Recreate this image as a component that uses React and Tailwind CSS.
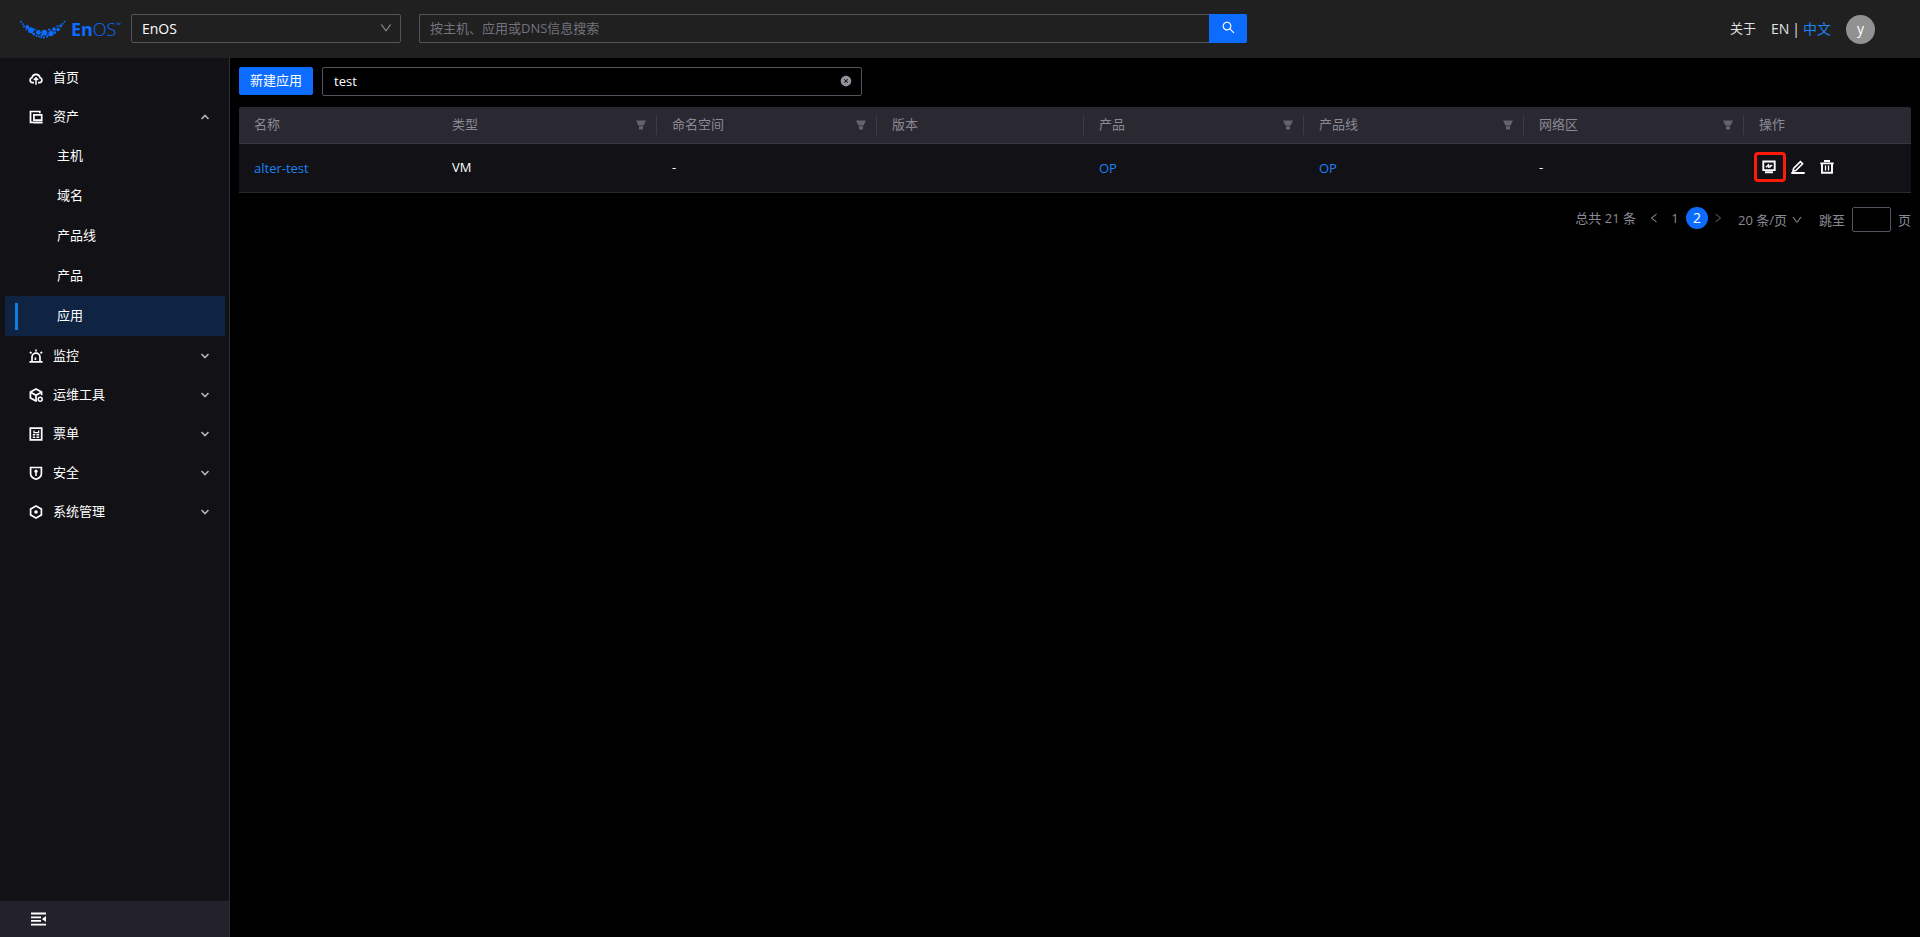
import React, { useState } from 'react';
import {
    AiOutlineDown,
    AiOutlineLeft,
    AiOutlineRight,
    AiOutlineSearch,
    AiFillCloseCircle,
} from 'react-icons/ai';

const logoDots = [
    [1, 1.5, 1], [3, 4, 1], [4, 6.5, 1.1], [7.5, 7, 2], [6.5, 9.6, 0.9], [11.2, 10.3, 3],
    [15.2, 9.4, 1], [14, 14.2, 1.5], [18.8, 12.4, 2.5], [16.8, 16, 1.1], [19.4, 16.6, 1],
    [22, 15.6, 1.2], [25, 12.8, 3], [24.4, 17.8, 1.1], [21.6, 17.6, 0.9], [27.6, 17, 1],
    [28.6, 15.6, 1], [31.8, 13.6, 2.7], [30, 9.6, 1.2], [34.8, 9.2, 1.9], [35.8, 12.6, 1.2],
    [39, 9.4, 1.8], [38.4, 6.2, 1], [41.6, 6, 1.5], [43.6, 3.6, 1], [45.6, 1.4, 0.9],
];

const menu = [
    { key: 'home', label: '首页', icon: HomeIcon },
    { key: 'assets', label: '资产', icon: AssetsIcon, open: true, children: ['主机', '域名', '产品线', '产品', '应用'] },
    { key: 'monitor', label: '监控', icon: AlarmIcon, children: [] },
    { key: 'tools', label: '运维工具', icon: BoxIcon, children: [] },
    { key: 'tickets', label: '票单', icon: TicketIcon, children: [] },
    { key: 'security', label: '安全', icon: ShieldIcon, children: [] },
    { key: 'system', label: '系统管理', icon: SystemIcon, children: [] },
];

const columns = [
    { title: '名称', width: 'w-[198px]' },
    { title: '类型', width: 'w-[220px]', filter: true, divider: true },
    { title: '命名空间', width: 'w-[220px]', filter: true, divider: true },
    { title: '版本', width: 'w-[207px]', divider: true },
    { title: '产品', width: 'w-[220px]', filter: true, divider: true },
    { title: '产品线', width: 'w-[220px]', filter: true, divider: true },
    { title: '网络区', width: 'w-[220px]', filter: true, divider: true },
    { title: '操作', width: 'w-[167px]' },
];

const apps = [
    { id: 0, name: 'alter-test', type: 'VM', namespace: '-', version: '', product: 'OP', line: 'OP', zone: '-' },
];

function Icon({ children, className = 'size-[14px]' }) {
    return (
        <svg viewBox="0 0 14 14" className={className} fill="none" stroke="currentColor" strokeWidth="1.7" aria-hidden="true">
            {children}
        </svg>
    );
}

function HomeIcon() {
    return (
        <Icon>
            <path d="M5 11.7H3.6a2.6 2.6 0 0 1-.6-5.1 4.1 4.1 0 0 1 8 0 2.6 2.6 0 0 1-.6 5.1H9" />
            <path d="M7 13.8V7.2M4.8 9 7 6.8 9.2 9" strokeWidth="1.5" />
        </Icon>
    );
}

function AssetsIcon() {
    return (
        <Icon>
            <path d="M4 12.3H1.5V1.5h9.3v1.7" />
            <path d="M4.9 4.9h7.8v5.3H4.9z" />
            <path d="M4.1 12.5h9.5" strokeWidth="2" />
        </Icon>
    );
}

function AlarmIcon() {
    return (
        <Icon>
            <path d="M.4 12.9h13.2M3 12.9V8.2a4 4 0 0 1 8 0v4.7" />
            <path d="M7 .4v2.2M.8 3l1.8 1.3M13.2 3l-1.8 1.3M6.4 11V8.6" strokeWidth="1.6" />
        </Icon>
    );
}

function BoxIcon() {
    return (
        <Icon>
            <path d="M7.5 12.7 7 13 1.4 9.9V4.1L7 1l5.6 3.1v3.2" />
            <path d="M1.6 4.2 7 7.2l5.4-3M7 7.2V13" />
            <circle cx="11.2" cy="11.2" r="2" strokeWidth="1.5" />
        </Icon>
    );
}

function TicketIcon() {
    return (
        <Icon>
            <path d="M1.3 1.2h11.4v11.6H1.3z" />
            <path d="M5 3.4v2.2h4.6V3.4" strokeWidth="1.3" />
            <path d="M3.8 7.8h2.4M3.8 10.2h2.4M7.4 7.8h2.8M7.4 10.2h2.8" strokeWidth="1.4" />
        </Icon>
    );
}

function ShieldIcon() {
    return (
        <Icon>
            <path d="M1.6 1.5h10.8v6.2c0 2.7-2.4 4.5-5.4 5.5-3-1-5.4-2.8-5.4-5.5z" />
            <path d="M7 5v5" strokeWidth="1.5" />
            <circle cx="7" cy="5.2" r="1.6" fill="currentColor" stroke="none" />
        </Icon>
    );
}

function SystemIcon() {
    return (
        <Icon>
            <path d="M7 1l5.4 3v6L7 13l-5.4-3V4z" />
            <circle cx="7" cy="7" r="1.8" fill="currentColor" stroke="none" />
        </Icon>
    );
}

function FilterIcon() {
    return (
        <svg viewBox="0 0 10 10" className="size-[10px] fill-current" aria-hidden="true">
            <path d="M0 .5h10L7.6 5.4H2.4zM3 6.2h4v3.3H3z" />
        </svg>
    );
}

function ScreenIcon() {
    return (
        <Icon>
            <path d="M1.3 1.5h11.4v8.6H1.3z" strokeWidth="1.9" />
            <path d="M3.8 7.2 6.4 4.8v2.4l1.6-.2V4.8M8 7.2l2.2-2.4" strokeWidth="1.2" />
            <path d="M3 12.3h8" strokeWidth="2" />
        </Icon>
    );
}

function EditIcon() {
    return (
        <Icon>
            <path d="M2.6 8.4 9.4 1.6l2.2 2.2-6.8 6.8-2.8.6z" strokeWidth="1.6" />
            <path d="M.3 13h13.4" strokeWidth="1.8" />
        </Icon>
    );
}

function TrashIcon() {
    return (
        <Icon>
            <path d="M4 1h6M.3 3.4h13.4" strokeWidth="1.9" />
            <path d="M2 3.4v9.4h10V3.4" strokeWidth="1.9" />
            <path d="M5.5 5.5v5M8.5 5.5v5" strokeWidth="1.3" />
        </Icon>
    );
}

function FoldIcon() {
    return (
        <svg viewBox="0 0 16 14" className="h-[14px] w-4" fill="none" stroke="currentColor" strokeWidth="1.8" aria-hidden="true">
            <path d="M0 1.5h15M0 5.3h10M0 8.9h10M0 12.7h15" />
            <path d="M15 4v6L11 7z" fill="currentColor" stroke="none" />
        </svg>
    );
}

function CaretIcon({ up }) {
    return (
        <svg viewBox="0 0 10 6" className="h-[6px] w-[10px] text-[#b4b4b8]" fill="none" stroke="currentColor" strokeWidth="1.6" aria-hidden="true">
            <path d={up ? 'M1.5 5 5 1.5 8.500 5' : 'M1.5 1 5 4.500 8.500 1'} />
        </svg>
    );
}

const Logo = () => (
    <a href="#home" className="flex w-[101px] items-center text-[#0b6cff]">
        <svg viewBox="0 0 47 19" className="mt-px h-[19px] w-[47px] fill-current" aria-hidden="true">
            {logoDots.map(([x, y, r]) => <circle key={`${x}-${y}`} cx={x} cy={y} r={r} />)}
        </svg>
        <span className="ml-[5px] flex text-lg leading-5">
            <b className="font-bold">En</b>
            <span className="font-light">OS</span>
            <sup className="top-0 text-[6px] leading-3">™</sup>
        </span>
    </a>
);

const Header = () => (
    <header className="flex h-[58px] items-center bg-[#202020] pr-[45px] pl-5">
        <Logo />
        <div className="relative mb-px ml-[10px] w-[270px]">
            <select aria-label="EnOS" className="block h-[29px] w-full appearance-none rounded-xs border border-[#54535e] bg-transparent px-[10px] text-sm leading-5 text-white">
                <option>EnOS</option>
            </select>
            <AiOutlineDown className="pointer-events-none absolute top-[7px] right-2 size-[14px] text-[#8b8a94]" />
        </div>
        <form className="mb-px ml-[18px] flex w-[828px]" onSubmit={(e) => e.preventDefault()}>
            <input
                type="text"
                aria-label="搜索"
                placeholder="按主机、应用或DNS信息搜索"
                className="h-[29px] min-w-0 grow rounded-l-xs border border-r-0 border-[#54535e] bg-transparent px-[10px] pb-px text-white placeholder:text-[#73727e]"
            />
            <button aria-label="搜索" className="flex h-[29px] w-[38px] items-center justify-center rounded-r-xs bg-[#0b6cff] pb-0.5 text-white">
                <AiOutlineSearch className="size-[15px]" />
            </button>
        </form>
        <div className="ml-auto flex items-center text-[#e2e2e2]">
            <a href="#about" className="mr-[15px] pb-0.5">关于</a>
            <div className="mr-[15px] flex gap-[3px] text-sm">
                <a href="#en">EN</a>
                <span>|</span>
                <a href="#zh" className="text-[#1b82f5]">中文</a>
            </div>
            <button className="size-[29px] rounded-full bg-[#919191] text-sm text-white">y</button>
        </div>
    </header>
);

const Sidebar = ({ selected, onSelect }) => (
    <aside className="flex w-[230px] shrink-0 flex-col border-r border-[#2f2e36] bg-[#111116]">
        <nav className="grow">
            <ul>
                {menu.map(({ key, label, icon: MenuIcon, open, children }) => (
                    <li key={key}>
                        <button className="flex h-[39px] w-full items-center pr-[19px] pl-[29px] text-white">
                            <MenuIcon />
                            <span className="ml-[10px] grow pb-0.5 text-left">{label}</span>
                            {children && <CaretIcon up={open} />}
                        </button>
                        {open && (
                            <ul className="pr-1 pl-[5px]">
                                {children.map((child) => (
                                    <li key={child} className={child === selected ? 'bg-[#0f2442]' : ''}>
                                        <a href="#app" onClick={() => onSelect(child)} className="flex h-10 items-center pl-[10px] text-white">
                                            <span className={child === selected ? 'h-[27px] w-[3px] bg-[#177ddc]' : 'w-[3px]'} />
                                            <span className="ml-[39px] pb-[3px]">{child}</span>
                                        </a>
                                    </li>
                                ))}
                            </ul>
                        )}
                    </li>
                ))}
            </ul>
        </nav>
        <button aria-label="收起" className="flex h-9 items-center bg-[#23222b] pl-[31px] text-white">
            <FoldIcon />
        </button>
    </aside>
);

const AppTable = () => (
    <table className="w-full table-fixed border-collapse overflow-hidden rounded-t-xs text-left">
        <thead className="bg-[#2a2830] text-[#8b8a94]">
            <tr className="h-9 border-b border-[#38373f]">
                {columns.map(({ title, width, filter, divider }) => (
                    <th key={title} className={`p-0 font-normal ${width}`}>
                        <div className={`flex h-5 items-center justify-between pr-[10px] pl-[15px] ${divider ? 'border-r border-[#3d3c45]' : ''}`}>
                            <span className="pb-0.5">{title}</span>
                            {filter && <button aria-label={`筛选${title}`} className="text-[#64636e]"><FilterIcon /></button>}
                        </div>
                    </th>
                ))}
            </tr>
        </thead>
        <tbody className="bg-[#111116] text-white">
            {apps.map((app) => (
                <tr key={app.id} className="h-[49px] border-b border-[#2a2930]">
                    <td className="py-0 pl-[15px]"><a href="#detail" className="text-[#1b82f5]">{app.name}</a></td>
                    <td className="pt-0 pb-0.5 pl-[15px]">{app.type}</td>
                    <td className="pt-0 pb-0.5 pl-[15px]">{app.namespace}</td>
                    <td className="pt-0 pb-0.5 pl-[15px]">{app.version}</td>
                    <td className="py-0 pl-[15px]"><a href="#product" className="text-[#1b82f5]">{app.product}</a></td>
                    <td className="py-0 pl-[15px]"><a href="#line" className="text-[#1b82f5]">{app.line}</a></td>
                    <td className="pt-0 pb-0.5 pl-[15px]">{app.zone}</td>
                    <td className="pt-0 pb-0.5 pl-[10px]">
                        <div className="flex">
                            <button aria-label="监控" className="relative flex h-[30px] w-[29px] items-center justify-center">
                                <ScreenIcon />
                                <span className="absolute inset-y-0 left-0 w-8 rounded-sm border-3 border-[#ff1b0a]" />
                            </button>
                            <button aria-label="编辑" className="flex h-[30px] w-[29px] items-center justify-center"><EditIcon /></button>
                            <button aria-label="删除" className="flex h-[30px] w-[29px] items-center justify-center"><TrashIcon /></button>
                        </div>
                    </td>
                </tr>
            ))}
        </tbody>
    </table>
);

const Pagination = () => (
    <div className="mt-[14px] flex items-start justify-end text-[#8b8a94]">
        <span className="mr-3 leading-[22px]">总共 21 条</span>
        <button aria-label="上一页" className="flex h-[22px] w-3 items-center justify-center"><AiOutlineLeft className="size-3" /></button>
        <button className="ml-1 h-[22px] w-[22px]">1</button>
        <button className="h-[22px] w-[22px] rounded-full bg-[#0b6cff] text-sm text-white">2</button>
        <button aria-label="下一页" disabled className="ml-1 flex h-[22px] w-3 items-center justify-center text-[#55545f]"><AiOutlineRight className="size-3" /></button>
        <div className="relative ml-[14px] w-[65px]">
            <select aria-label="每页条数" className="block h-[26px] w-full appearance-none bg-transparent">
                <option>20 条/页</option>
            </select>
            <AiOutlineDown className="pointer-events-none absolute top-[7px] right-0 size-3" />
        </div>
        <label className="ml-4 flex h-[26px] items-center gap-[7px]">
            跳至
            <input type="text" className="h-[25px] w-[39px] rounded-xs border border-[#54535e] bg-transparent px-2" />
            页
        </label>
    </div>
);

export default function App() {
    const [selected, setSelected] = useState('应用');
    const [keyword, setKeyword] = useState('test');

    return (
        <div className="flex min-h-screen flex-col bg-black font-['Open_Sans','Noto_Sans_CJK_SC',sans-serif] text-[13px] leading-5">
            <Header />
            <div className="flex grow">
                <Sidebar selected={selected} onSelect={setSelected} />
                <main className="min-w-0 grow px-[9px] pt-[9px]">
                    <div className="mb-[11px] flex items-start gap-[9px]">
                        <button className="h-7 w-[74px] rounded-xs bg-[#0b6cff] pb-0.5 text-white">新建应用</button>
                        <div className="relative w-[540px]">
                            <input
                                type="text"
                                aria-label="应用名称"
                                value={keyword}
                                onChange={(e) => setKeyword(e.target.value)}
                                className="block h-[29px] w-full rounded-xs border border-[#54535e] bg-transparent px-[11px] pb-0.5 text-white"
                            />
                            <button aria-label="清除" onClick={() => setKeyword('')} className="absolute top-2 right-[10px] text-[#93929d]">
                                <AiFillCloseCircle className="size-3" />
                            </button>
                        </div>
                    </div>
                    <AppTable />
                    <Pagination />
                </main>
            </div>
        </div>
    );
}
